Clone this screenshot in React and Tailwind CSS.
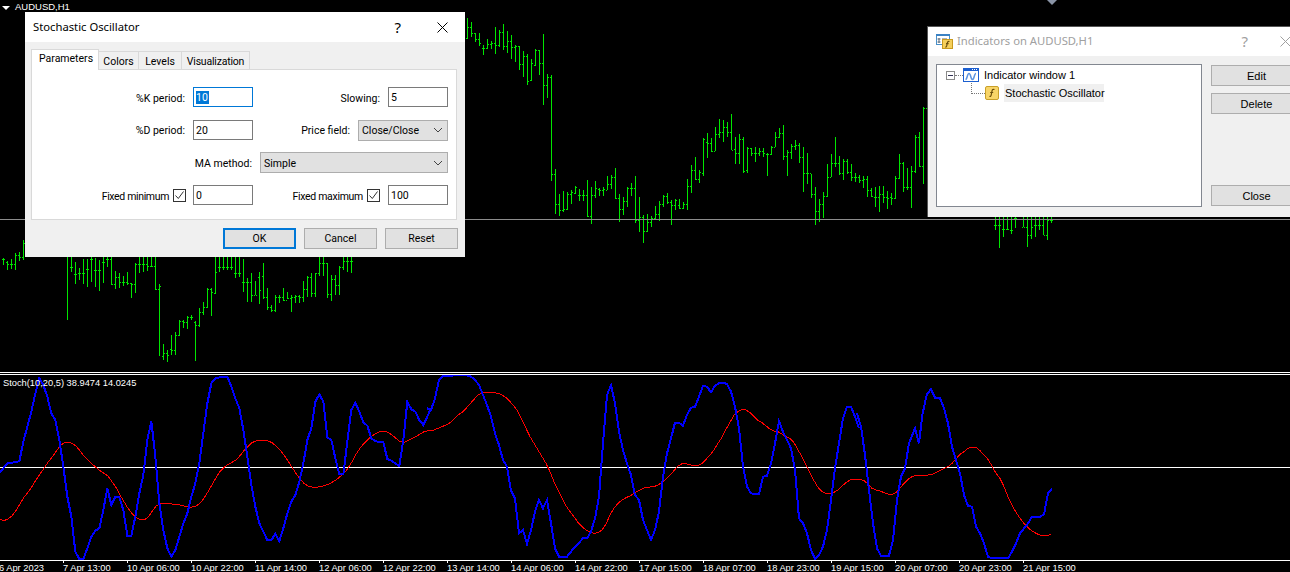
import React from "react";

// bars are [high, low, open, close], read off 3x crops, so y = base + v / 3
const GROUPS = [
  {
    x: 3,
    base: 240,
    bars: [
      [55, 75, 58, 58], [62, 90, 65, 72], [57, 88, 72, 72], [40, 90, 72, 45], [37, 62, 45, 50], [0, 60, 50, 10],
    ],
  },
  {
    x: 67,
    base: 240,
    bars: [
      [40, 240, 45, 45], [40, 95, 80, 80], [65, 132, 102, 102], [85, 120, 100, 100], [57, 132, 100, 100], [57, 140, 88, 88],
      [40, 125, 58, 58], [55, 140, 90, 90], [60, 152, 90, 90], [40, 128, 65, 65], [40, 80, 58, 58], [40, 135, 58, 132],
      [93, 147, 132, 112], [100, 145, 112, 125], [107, 138, 125, 125], [95, 135, 125, 130], [128, 173, 130, 132], [70, 160, 132, 72],
      [40, 100, 72, 72], [40, 97, 72, 72], [40, 92, 72, 78], [40, 80, 78, 78], [40, 150, 78, 148], [132, 347, 148, 138],
      [312, 360, 347, 340], [330, 366, 340, 345], [285, 345, 328, 330], [275, 345, 330, 285], [240, 288, 285, 242], [240, 265, 242, 245],
      [228, 268, 245, 232], [225, 240, 232, 232], [243, 362, 245, 255], [205, 260, 255, 215], [187, 225, 215, 200], [145, 205, 200, 147],
      [145, 227, 147, 155], [40, 163, 160, 95], [40, 95, 82, 82], [40, 90, 82, 82], [40, 90, 82, 82], [40, 90, 82, 82],
      [40, 115, 100, 100], [40, 110, 100, 100], [58, 155, 125, 125], [115, 185, 125, 125], [100, 185, 125, 165], [122, 165, 165, 165],
      [97, 193, 110, 150], [70, 178, 108, 170], [143, 210, 170, 200], [195, 215, 200, 210], [165, 215, 210, 172], [165, 190, 172, 172],
      [145, 182, 172, 180], [157, 178, 180, 175], [165, 215, 175, 170], [165, 190, 170, 168], [165, 190, 168, 170], [123, 185, 170, 147],
      [108, 170, 147, 112], [98, 172, 112, 158], [98, 172, 158, 100], [40, 108, 100, 70], [40, 108, 70, 70], [70, 175, 70, 162],
      [105, 182, 162, 118], [105, 165, 118, 135], [78, 165, 135, 80], [40, 90, 80, 62], [40, 95, 62, 62], [40, 98, 62, 62],
    ],
  },
  {
    x: 467,
    base: 0,
    bars: [
      [55, 118, 115, 80], [67, 110, 80, 100], [100, 125, 100, 118], [100, 137, 118, 130], [135, 165, 143, 145], [118, 148, 145, 132],
      [122, 147, 132, 130], [82, 162, 130, 135], [90, 140, 135, 97], [72, 150, 97, 137], [93, 158, 137, 124], [105, 178, 124, 140],
      [135, 185, 140, 137], [137, 210, 137, 193], [153, 230, 193, 168], [162, 255, 168, 242], [178, 242, 240, 190], [148, 197, 195, 150],
      [150, 225, 150, 190], [102, 315, 190, 256], [222, 294, 256, 232], [225, 543, 230, 522], [507, 642, 522, 613], [582, 648, 613, 631],
      [573, 635, 631, 628], [575, 630, 628, 582], [570, 612, 582, 575], [558, 582, 578, 562], [567, 603, 586, 586], [570, 603, 586, 586],
      [540, 650, 586, 648], [562, 672, 648, 586], [543, 595, 586, 565], [563, 587, 568, 570], [562, 587, 570, 566], [528, 570, 570, 552],
      [525, 567, 552, 532], [504, 596, 532, 593], [582, 666, 593, 628], [590, 645, 628, 604], [562, 620, 604, 565], [548, 588, 565, 565],
      [528, 668, 565, 660], [590, 696, 660, 650], [645, 728, 650, 692], [642, 696, 692, 666], [648, 680, 666, 655], [618, 660, 655, 643],
      [603, 662, 643, 613], [585, 620, 613, 588], [579, 612, 588, 605], [600, 674, 605, 616], [597, 630, 616, 600], [598, 628, 616, 625],
      [605, 628, 625, 613], [537, 630, 613, 558], [495, 578, 558, 511], [472, 540, 511, 538], [510, 548, 538, 515], [415, 527, 520, 418],
      [400, 473, 425, 430], [413, 455, 430, 452], [380, 452, 452, 403], [358, 415, 403, 395], [360, 425, 395, 382], [365, 412, 382, 397],
      [342, 450, 397, 450], [412, 492, 448, 460], [402, 492, 460, 418], [410, 518, 418, 514], [440, 518, 510, 443], [443, 467, 443, 460],
      [440, 486, 460, 460], [445, 467, 460, 454], [445, 470, 454, 460], [460, 528, 462, 463], [438, 465, 463, 442], [396, 442, 440, 412],
      [384, 415, 412, 400], [375, 480, 400, 468], [450, 528, 468, 456], [432, 477, 456, 438], [420, 450, 438, 436], [430, 488, 436, 472],
      [440, 575, 472, 520], [460, 552, 520, 520], [522, 594, 520, 583], [562, 675, 583, 634], [598, 665, 634, 612], [576, 654, 612, 588],
      [492, 590, 588, 532], [462, 532, 532, 488], [412, 500, 488, 490], [468, 526, 490, 520], [477, 540, 520, 484], [477, 522, 484, 517],
      [492, 542, 517, 530], [520, 545, 530, 532], [525, 550, 532, 540], [528, 565, 540, 536], [528, 590, 536, 571], [565, 590, 571, 588],
      [560, 622, 590, 590], [558, 635, 590, 583], [558, 610, 583, 590], [572, 627, 590, 593], [580, 614, 590, 593], [528, 596, 593, 535],
      [462, 538, 535, 490], [485, 575, 490, 562], [505, 570, 562, 562], [498, 624, 562, 514], [405, 518, 514, 412], [396, 500, 412, 497],
      [322, 552, 497, 325], [300, 375, 325, 325],
    ],
  },
  {
    x: 995,
    base: 0,
    bars: [
      [640, 690, 676, 676], [640, 745, 676, 676], [640, 712, 688, 688], [640, 690, 688, 688], [640, 702, 690, 690], [640, 685, 655, 655],
      [640, 650, 645, 645], [640, 680, 680, 680], [640, 740, 680, 705], [640, 718, 705, 680], [640, 712, 675, 675], [640, 690, 675, 675],
      [640, 705, 675, 705], [640, 720, 705, 660], [640, 670, 660, 660],
    ],
  },
];

const BLUE = [
  [0, "0,338 12,322 24,310 36,308 58,304 70,245 82,200 94,155 106,100 118,55 130,75 142,110 154,160 166,180 178,240 190,320 202,410 214,470 226,575 238,597 250,597 262,565 274,530 286,512 298,505 310,450 322,385 334,435 346,410 358,412 370,450 382,527 394,527 406,470 418,400 430,345 442,240 454,183 466,290 478,430 490,510 502,565 514,590 526,570 538,530 550,490 562,460 574,410 586,370 598,310 610,220 622,130 634,70 646,55 658,52 670,50 682,50 694,80 706,115 718,145 730,210 742,290 754,375 766,440 778,490 790,515 802,540 814,540 826,522 838,543 850,505 862,460 874,425 886,405 898,365 910,310 922,240 934,205 946,125 958,103 970,125 982,232 994,240 1006,295 1018,343 1030,343 1042,245 1054,150 1066,128 1078,155 1090,187 1102,197 1114,235 1126,243 1138,247 1150,247 1162,297 1174,302 1186,310 1198,318 1210,240 1222,125 1234,148 1246,155 1258,180 1270,195 1282,170 1293,145"],
  [430, "-9,145 3,150 15,115 27,60 39,48 51,48 63,47 75,46 87,46 99,46 111,46 123,50 135,60 147,75 159,105 171,135 183,170 195,220 207,255 219,300 231,320 243,392 255,415 267,520 279,510 291,552 303,510 315,455 327,420 339,445 351,420 363,490 375,565 387,590 399,590 411,590 423,575 435,560 447,548 459,535 471,535 483,515 495,475 507,410 519,250 531,105 543,75 555,130 567,215 579,270 591,310 603,345 615,405 627,420 639,480 651,510 663,540 675,510 687,455 699,350 711,280 723,235 735,188 747,188 759,197 771,165 783,143 795,140 807,110 819,77 831,80 843,97 855,77 867,70 879,68 891,72 903,95 915,140 927,205 939,320 951,380 963,400 975,402 987,402 999,350 1011,347 1023,310 1035,250 1047,183 1059,215 1071,240 1083,265 1095,330 1107,475 1119,490 1131,520 1143,570 1155,597 1167,585 1179,560 1191,510 1203,420 1215,325 1227,250 1239,175 1251,140 1263,140 1275,170 1287,205"],
  [860, "-9,160 3,200 15,285 27,390 39,490 51,565 63,587 75,587 87,587 99,540 111,420 123,350 135,325 147,250 165,205 177,250 187,165 200,105 213,87 225,113 240,115 252,145 264,190 276,260 288,300 300,340 312,405 324,437 336,440 348,500 360,520 372,550 384,590 396,595 408,595 420,595 432,595 444,595 456,575 468,550 480,520 492,505 504,490 516,470 528,470 540,470 552,463 564,400 576,385"],
];

const RED = [
  [0, "0,478 12,482 24,477 36,468 48,452 60,432 72,412 84,397 96,380 108,360 120,342 132,325 144,307 156,292 168,275 180,258 192,249 204,247 216,250 228,258 240,272 252,288 264,300 276,312 288,322 300,332 312,340 324,348 336,365 348,382 360,405 372,425 384,445 396,460 408,472 420,478 432,480 444,472 456,455 468,438 480,431 492,430 504,431 516,432 528,434 540,435 552,438 564,441 576,441 588,438 600,430 612,415 624,395 636,375 648,353 660,335 672,322 684,313 696,307 708,300 720,287 732,272 744,260 756,248 768,243 780,241 792,241 804,243 816,248 828,258 840,270 852,285 864,303 876,322 888,340 900,357 912,370 924,378 936,381 948,382 960,380 972,377 984,373 996,367 1008,360 1020,350 1032,340 1044,325 1056,305 1068,283 1080,265 1092,250 1104,238 1116,228 1128,220 1140,215 1152,214 1164,217 1176,225 1188,235 1200,245 1212,247 1224,242 1236,236 1248,230 1260,222 1272,215 1284,212 1296,212"],
  [430, "0,212 12,210 24,205 36,200 48,195 60,188 72,177 84,165 96,157 108,145 120,132 132,118 144,105 156,98 168,98 180,97 192,98 204,100 216,105 228,113 240,125 252,138 264,155 276,180 288,205 300,230 312,250 324,270 336,290 348,310 360,335 372,365 384,390 396,415 408,437 420,455 432,470 444,487 456,500 468,510 480,517 492,520 504,518 516,510 528,492 540,465 552,445 564,430 576,420 588,413 600,408 612,400 624,393 636,387 648,382 660,381 672,380 684,375 696,367 708,357 720,345 732,332 744,318 756,311 768,311 780,314 792,318 804,316 816,310 828,298 840,285 852,270 864,250 876,232 888,208 900,187 912,165 924,155 936,149 948,150 960,158 972,170 984,182 996,188 1008,198 1020,207 1032,213 1044,215 1056,222 1068,230 1080,235 1092,248 1104,270 1116,290 1128,315 1140,340 1152,362 1164,382 1176,395 1188,400 1200,401 1212,397 1224,390 1236,378 1248,368 1260,360 1272,357 1284,357 1296,358"],
  [860, "0,358 12,362 24,372 36,385 48,390 60,393 72,398 84,402 96,403 108,397 120,385 132,370 144,358 156,350 168,346 180,345 192,345 204,345 216,343 228,338 240,332 252,325 264,320 276,310 288,297 300,283 312,275 324,265 336,261 348,262 360,272 372,285 384,298 396,318 408,340 420,355 432,380 444,410 456,435 468,457 480,475 492,490 504,503 516,513 528,520 540,525 552,526 564,526 572,523"],
];

const AXIS = [
  "7 Apr 13:00", "10 Apr 06:00", "10 Apr 22:00", "11 Apr 14:00", "12 Apr 06:00", "12 Apr 22:00", "13 Apr 14:00", "14 Apr 06:00",
  "14 Apr 22:00", "17 Apr 15:00", "18 Apr 07:00", "18 Apr 23:00", "19 Apr 15:00", "20 Apr 07:00", "20 Apr 23:00", "21 Apr 15:00",
];

const BarChart = () => (
  <svg width="1290" height="372" shapeRendering="crispEdges" className="block">
    {GROUPS.map((g) =>
      g.bars.map(([h, l, o, c], i) => {
        const x = g.x + i * 4;
        const y = (v) => Math.round(g.base + v / 3);
        return (
          <g key={x} fill="#00e600">
            <rect x={x} y={y(h)} width="1" height={y(l) - y(h)} />
            <rect x={x - 1} y={y(o)} width="1" height="1" />
            <rect x={x + 1} y={y(c)} width="1" height="1" />
          </g>
        );
      })
    )}
    <rect x="0" y="219" width="1290" height="1" fill="#8c8c8c" />
  </svg>
);

const Oscillator = () => (
  <svg width="1290" height="185" viewBox="0 375 1290 185" shapeRendering="crispEdges" className="block">
    <rect x="0" y="467" width="1290" height="1" fill="#fff" />
    {[
      [RED, "#ff0000", 1],
      [BLUE, "#0000ff", 2],
    ].map(([lines, color, width]) =>
      lines.map(([offset, points]) => (
        <polyline
          key={color + offset}
          points={points
            .split(" ")
            .map((p) => {
              const [x, y] = p.split(",").map(Number);
              return `${offset + x / 3},${360 + y / 3}`;
            })
            .join(" ")}
          fill="none"
          stroke={color}
          strokeWidth={width}
        />
      ))
    )}
  </svg>
);

const Field = ({ children, active }) => (
  <div
    className={`w-[60px] h-5 shrink-0 bg-white border pl-[2px] leading-[20px] ${
      active ? "border-[#0078d7]" : "border-[#7a7a7a]"
    }`}
  >
    {children}
  </div>
);

const Chevron = () => (
  <svg width="10" height="6" viewBox="0 0 10 6" className="shrink-0">
    <path d="M1 1l4 4 4-4" fill="none" stroke="#444" strokeWidth="1" />
  </svg>
);

const Select = ({ width, children }) => (
  <div className={`${width} h-[21px] self-start flex items-center justify-between bg-[#e1e1e1] border border-[#adadad] pl-[3px] pr-[4px]`}>
    <span className="pt-[2px]">{children}</span>
    <Chevron />
  </div>
);

const Check = () => (
  <div className="w-[13px] h-[13px] border border-[#333] bg-white flex items-center justify-center">
    <svg width="11" height="11" viewBox="0 0 11 11">
      <path d="M1.5 5.500l2.800 3L9.500 1.500" fill="none" stroke="#333" strokeWidth="1" />
    </svg>
  </div>
);

const FormRow = ({ left, right }) => (
  <div className="flex items-center h-5">
    <div className="w-[221px] flex items-center justify-end">{left}</div>
    <div className="flex-1 flex items-center justify-end">{right}</div>
  </div>
);

const Tab = ({ children, width }) => (
  <div className={`${width} h-[18px] border border-b-0 border-l-0 border-[#d9d9d9] text-center leading-[20px]`}>{children}</div>
);

const DialogButton = ({ children, primary }) => (
  <div
    className={`w-[73px] h-[21px] flex items-center justify-center bg-[#e1e1e1] ${
      primary ? "border-2 border-[#0078d7]" : "border border-[#adadad]"
    }`}
  >
    {children}
  </div>
);

const StochasticDialog = () => (
  <div className="absolute left-[25px] top-[12px] w-[440px] h-[245px] bg-[#f0f0f0] text-[10.500px] text-black font-['Roboto',sans-serif]">
    <div className="h-[30px] bg-white flex items-center pl-2">
      <span className="text-[11.250px] font-['Noto_Sans',sans-serif]">Stochastic Oscillator</span>
      <span className="ml-auto mr-[36px] text-[15px] font-['Noto_Sans',sans-serif]">?</span>
      <svg width="11" height="11" viewBox="0 0 11 11" className="mr-[17px]">
        <path d="M.5.5l10 10M10.500.5l-10 10" stroke="#000" strokeWidth="1" />
      </svg>
    </div>
    <div className="pl-[6px] pr-2 pt-[7px]">
      <div className="flex items-end h-5">
        <div className="h-[21px] w-[68px] -mb-px z-10 bg-white border border-b-0 border-[#d9d9d9] pl-[7px] leading-[18px]">
          Parameters
        </div>
        <Tab width="w-[40px]">Colors</Tab>
        <Tab width="w-[43px]">Levels</Tab>
        <Tab width="w-[68px] tracking-[-0.2px]">Visualization</Tab>
      </div>
      <div className="h-[151px] bg-white border border-[#d9d9d9] pt-[17px] pr-2 flex flex-col gap-[13px]">
        <FormRow
          left={
            <>
              <span className="mr-2 pt-[4px]">%K period:</span>
              <Field active>
                <span className="bg-[#0078d7] text-white pr-[1px]">10</span>
              </Field>
            </>
          }
          right={
            <>
              <span className="mr-2 pt-[4px]">Slowing:</span>
              <Field>5</Field>
            </>
          }
        />
        <FormRow
          left={
            <>
              <span className="mr-2 pt-[2px]">%D period:</span>
              <Field>20</Field>
            </>
          }
          right={
            <>
              <span className="mr-2 pt-[2px]">Price field:</span>
              <Select width="w-[90px]">Close/Close</Select>
            </>
          }
        />
        <div className="flex items-center justify-end h-5 -mt-px">
          <span className="mr-2 pt-[4px]">MA method:</span>
          <Select width="w-[188px]">Simple</Select>
        </div>
        <FormRow
          left={
            <>
              <span className="mr-1 pt-[4px] tracking-[-0.35px]">Fixed minimum</span>
              <Check />
              <div className="w-[7px]" />
              <Field>0</Field>
            </>
          }
          right={
            <>
              <span className="mr-1 pt-[4px] tracking-[-0.3px]">Fixed maximum</span>
              <Check />
              <div className="w-2" />
              <Field>100</Field>
            </>
          }
        />
      </div>
      <div className="flex justify-end gap-2 pt-2 -mr-px">
        <DialogButton primary>OK</DialogButton>
        <DialogButton>Cancel</DialogButton>
        <DialogButton>Reset</DialogButton>
      </div>
    </div>
  </div>
);

const ListIcon = () => (
  <svg width="17" height="15" viewBox="0 0 17 15" className="shrink-0">
    <rect x=".5" y=".5" width="13" height="10" fill="#fff" stroke="#4a90c8" />
    <rect x="0" y="0" width="14" height="2" fill="#3b82c4" />
    <path d="M3 4v5M1.500 5h3M1.500 8h3M6 5h5" stroke="#5a6a7a" strokeWidth="1" />
    <rect x="6.500" y="5.500" width="10" height="9" fill="#f5cf5a" stroke="#c89a1e" />
    <path d="M13.500 7.500c-1.500-.5-2 .5-2.200 1.500l-.6 3c-.2 1-.8 1.200-1.400.8M10 9.700h2.600" fill="none" stroke="#6b4e0c" strokeWidth="1.200" />
  </svg>
);

const WindowIcon = () => (
  <svg width="16" height="14" viewBox="0 0 16 14" className="shrink-0">
    <rect x=".5" y=".5" width="15" height="13" fill="#fff" stroke="#1c5fd0" />
    <rect x="0" y="0" width="16" height="3" fill="#1c5fd0" />
    <path d="M9 1.500h1M11 1.500h1M13 1.500h1" stroke="#fff" />
    <path d="M2.500 11.500c2 0 1.500-6 3.500-6s1.500 6 3.500 6 1.500-6 3.500-6" fill="none" stroke="#5b93e0" strokeWidth="1.500" />
  </svg>
);

const FunctionIcon = () => (
  <svg width="14" height="14" viewBox="0 0 14 14" className="shrink-0">
    <rect x=".5" y=".5" width="13" height="13" rx="1.500" fill="#f8d568" stroke="#c9a02a" />
    <path d="M9.500 3.500c-1.500-.6-2.300.2-2.500 1.500l-.8 4c-.2 1.200-.8 1.600-1.700 1.200M5.200 6.500h3" fill="none" stroke="#6b4e0c" strokeWidth="1.200" />
  </svg>
);

const SideButton = ({ children }) => (
  <div className="h-[21px] pt-px flex items-center justify-center bg-[#e1e1e1] border border-[#adadad]">{children}</div>
);

const IndicatorsDialog = () => (
  <div className="absolute left-[927px] top-[26px] w-[400px] h-[191px] bg-[#f0f0f0] border-l border-t border-[#555] text-[11px] font-['Liberation_Sans',sans-serif]">
    <div className="h-[29px] bg-white flex items-center pl-2">
      <ListIcon />
      <span className="ml-[4px] text-[11.250px] text-[#a0a0a0] font-['Noto_Sans',sans-serif]">Indicators on AUDUSD,H1</span>
      <span className="ml-[148px] text-[15px] text-[#a0a0a0] font-['Noto_Sans',sans-serif]">?</span>
      <svg width="11" height="11" viewBox="0 0 11 11" className="ml-[32px]">
        <path d="M.5.5l10 10M10.500.5l-10 10" stroke="#a0a0a0" strokeWidth="1" />
      </svg>
    </div>
    <div className="flex pl-2 pt-2 gap-[9px]">
      <div className="w-[266px] h-[143px] bg-white border border-[#828790] text-black pt-[3px]">
        <div className="flex items-center h-[14px] pl-[9px]">
          <div className="w-[9px] h-[9px] border border-[#8a8a8a] flex items-center justify-center">
            <div className="w-[5px] h-px bg-[#335]" />
          </div>
          <div className="w-[8px] border-t border-dotted border-[#777]" />
          <WindowIcon />
          <span className="ml-[5px] whitespace-nowrap">Indicator window 1</span>
        </div>
        <div className="flex items-center h-[18px] mt-[2px] pl-[34px]">
          <div className="w-[14px] h-[11px] -mt-[9px] border-l border-b border-dotted border-[#777]" />
          <FunctionIcon />
          <span className="ml-[5px] w-[100px] h-[18px] leading-[18px] pl-px bg-[#f0f0f0] whitespace-nowrap">Stochastic Oscillator</span>
        </div>
      </div>
      <div className="w-[91px] h-[141px] mt-px flex flex-col text-black">
        <SideButton>Edit</SideButton>
        <div className="h-[7px]" />
        <SideButton>Delete</SideButton>
        <div className="flex-1" />
        <SideButton>Close</SideButton>
      </div>
    </div>
  </div>
);

export default function App() {
  return (
    <div className="relative w-[1290px] h-[572px] bg-black overflow-hidden flex flex-col font-['Liberation_Sans',sans-serif] text-white text-[9.300px]">
      <div className="h-[372px] shrink-0">
        <BarChart />
      </div>
      <div className="h-[3px] shrink-0 border-y border-white" />
      <div className="relative h-[185px] shrink-0">
        <Oscillator />
        <span className="absolute left-[3px] top-[3px] leading-[11px]">Stoch(10,20,5) 38.9474 14.0245</span>
      </div>
      <div className="border-t border-white flex flex-1">
        <div className="w-[64px] -ml-px shrink-0 whitespace-nowrap leading-[11px] pt-[2px]">6 Apr 2023</div>
        {AXIS.map((label) => (
          <div key={label} className="w-16 shrink-0 relative whitespace-nowrap leading-[11px] pt-[2px]">
            <div className="absolute left-0 -top-px w-px h-[3px] bg-white" />
            {label}
          </div>
        ))}
      </div>

      <div className="absolute left-[2px] top-[6px] w-0 h-0 border-x-[4px] border-x-transparent border-t-[4px] border-t-white" />
      <span className="absolute left-[15px] top-[1px] leading-[12px] text-[9.500px]">AUDUSD,H1</span>
      <div className="absolute left-[1047px] top-0 w-0 h-0 border-x-[5px] border-x-transparent border-t-[5px] border-t-[#8a94a6]" />

      <StochasticDialog />
      <IndicatorsDialog />
    </div>
  );
}
